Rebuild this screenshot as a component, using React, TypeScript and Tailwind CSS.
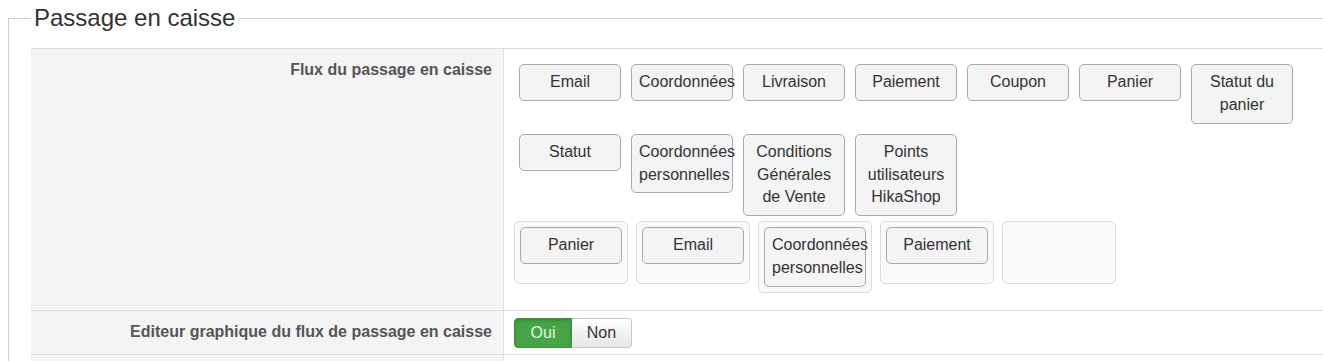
import React from 'react';

const flowSteps: string[] = [
  'Email',
  'Coordonnées',
  'Livraison',
  'Paiement',
  'Coupon',
  'Panier',
  'Statut du panier',
  'Statut',
  'Coordonnées personnelles',
  'Conditions Générales de Vente',
  'Points utilisateurs HikaShop',
];

const stepSlots: (string | null)[] = ['Panier', 'Email', 'Coordonnées personnelles', 'Paiement', null];

const StepButton: React.FC<{ label: string }> = ({ label }) => (
  <div className="w-[102px] shrink-0 rounded-[5px] border border-[#a9a9a9] bg-[#f4f4f4] px-[7px] py-[6px] text-center text-[16px] leading-[22.86px] text-[#333]">
    {label}
  </div>
);

const App: React.FC = () => {
  return (
    <div className="h-[361px] w-[1323px] overflow-hidden bg-white font-['Liberation_Sans',Arial,sans-serif]">
      <fieldset className="ml-[8px] mt-[4px] w-[1360px] border border-[#cfcfcf] pl-[22px]">
        <legend className="px-[3px] text-[24px] leading-[28px] text-[#333]">Passage en caisse</legend>

        <div className="mt-[16px] border-t border-[#ddd]">
          {/* Flux du passage en caisse */}
          <div className="grid grid-cols-[473px_1fr] border-b border-[#ddd]">
            <div className="border-r border-[#e4e4e4] bg-[#f4f4f4] pr-[11px] pt-[10px] text-right text-[16px] font-bold leading-[22.86px] text-[#555]">
              Flux du passage en caisse
            </div>
            <div className="pb-[17px] pl-[10px] pt-[15px]">
              <div className="flex w-[800px] flex-wrap items-start gap-[10px] pl-[5px]">
                {flowSteps.map((step, i) => (
                  <StepButton key={i} label={step} />
                ))}
              </div>
              <div className="mt-[5px] flex items-start gap-[8px]">
                {stepSlots.map((slot, i) => (
                  <div
                    key={i}
                    className="min-h-[63px] w-[114px] rounded-[5px] border border-[#dcdcdc] bg-[#f9f9f9] p-[5px]"
                  >
                    {slot && <StepButton label={slot} />}
                  </div>
                ))}
              </div>
            </div>
          </div>

          {/* Editeur graphique */}
          <div className="grid grid-cols-[473px_1fr] border-b border-[#ddd]">
            <div className="flex items-center justify-end border-r border-[#e4e4e4] bg-[#f4f4f4] pr-[11px] text-[16px] font-bold leading-[22.86px] text-[#555]">
              Editeur graphique du flux de passage en caisse
            </div>
            <div className="pb-[6px] pl-[10px] pt-[7px]">
              <div className="flex">
                <button className="h-[30px] w-[58px] rounded-l-[4px] border border-[#3d8f3d] bg-[#46a546] text-center text-[16px] leading-[20px] text-[#e6f4e6] shadow-[inset_0_2px_4px_rgba(0,0,0,0.15)]">
                  Oui
                </button>
                <button className="h-[30px] w-[60px] rounded-r-[4px] border border-l-0 border-[#c8c8c8] bg-gradient-to-b from-white to-[#e6e6e6] text-center text-[16px] leading-[20px] text-[#333]">
                  Non
                </button>
              </div>
            </div>
          </div>

          <div className="grid h-[40px] grid-cols-[473px_1fr]">
            <div className="border-r border-[#e4e4e4] bg-[#f4f4f4]" />
            <div />
          </div>
        </div>
      </fieldset>
    </div>
  );
};

export default App;
